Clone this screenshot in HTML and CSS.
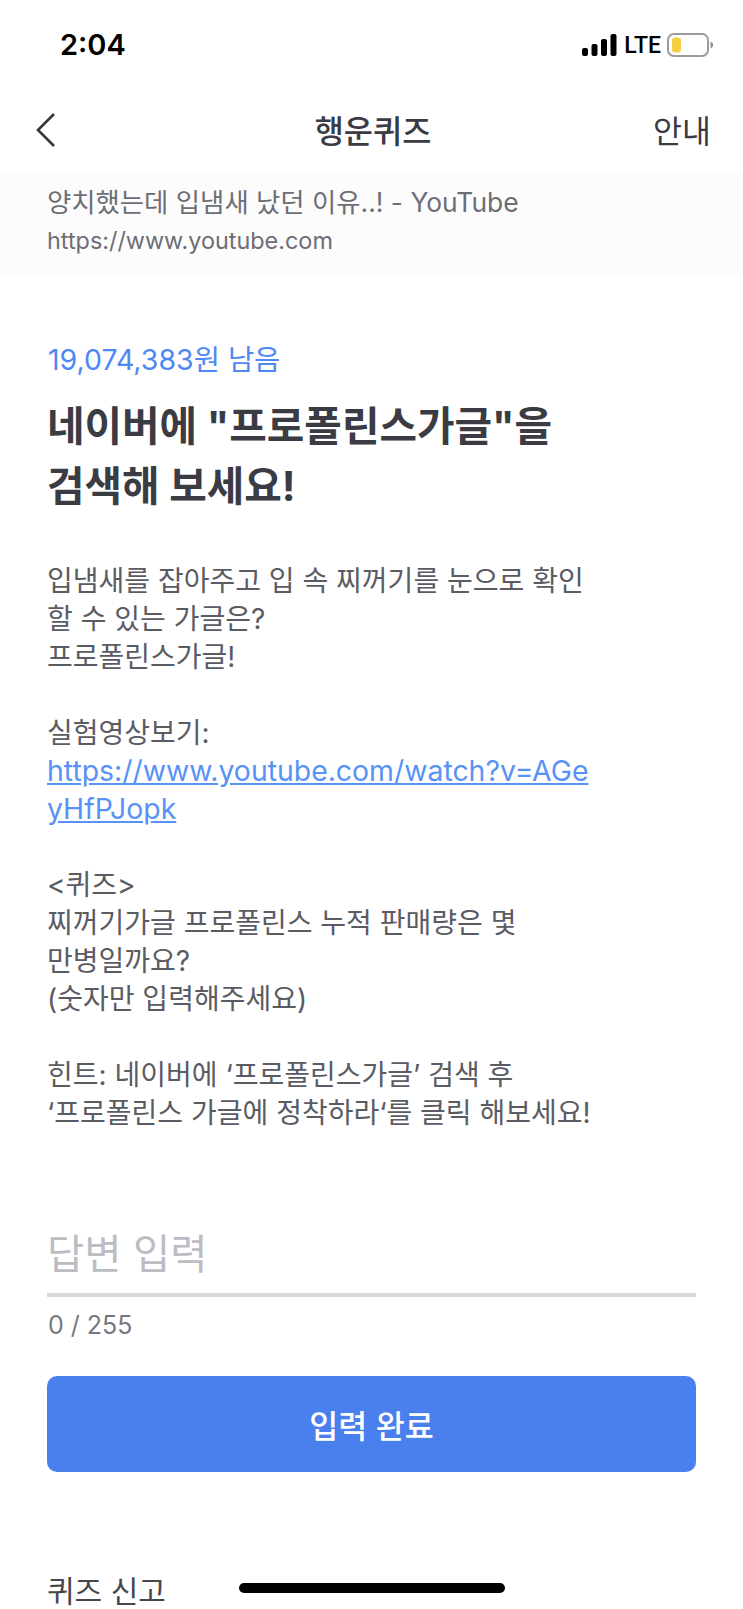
FILE: index.html
```html
<!DOCTYPE html>
<html lang="ko">
<head>
    <meta charset="UTF-8">
    <meta name="viewport" content="width=device-width, initial-scale=1.0">
    <title>행운퀴즈</title>
    <link rel="stylesheet" href="styles.css">
</head>
<body>

    <!-- 상태바 -->
    <div class="status-bar">
        <span class="clock">2:04</span>
        <div class="status-right">
            <svg class="signal" width="36" height="22" viewBox="0 0 36 22">
                <rect x="0" y="14" width="6" height="8" rx="2"></rect>
                <rect x="9.5" y="10" width="6" height="12" rx="2"></rect>
                <rect x="19" y="5" width="6" height="17" rx="2"></rect>
                <rect x="28.500" y="0" width="6" height="22" rx="2"></rect>
            </svg>
            <span class="lte">LTE</span>
            <svg class="battery" width="46" height="24" viewBox="0 0 46 24">
                <rect x="1" y="1" width="40" height="22" rx="6" fill="#fff" stroke="#9b9b9b" stroke-width="2"></rect>
                <rect x="5" y="4.500" width="9" height="15" rx="3" fill="#f8cd46"></rect>
                <path d="M43.500 8.500 L46 10.500 V13.500 L43.500 15.500 Z" fill="#8e8e8e"></path>
            </svg>
        </div>
    </div>

    <!-- 상단 네비 -->
    <div class="nav">
        <svg class="back" width="22" height="36" viewBox="0 0 22 36">
            <path d="M19 2 L3 18 L19 34" fill="none" stroke="#36373d" stroke-width="2.600"></path>
        </svg>
        <span class="nav-title">행운퀴즈</span>
        <span class="nav-link">안내</span>
    </div>

    <!-- 링크 배너 -->
    <div class="banner">
        <p class="banner-title">양치했는데 입냄새 났던 이유..! - YouTube</p>
        <p class="banner-url">https://www.youtube.com</p>
    </div>

    <div class="quiz">
        <p class="remain">19,074,383원 남음</p>
        <h1 class="headline">네이버에 "프로폴린스가글"을<br>검색해 보세요!</h1>

        <div class="desc">
            <p>입냄새를 잡아주고 입 속 찌꺼기를 눈으로 확인<br>할 수 있는 가글은?<br>프로폴린스가글!</p>
            <p>실험영상보기:<br><a href="#">https://www.youtube.com/watch?v=AGe<br>yHfPJopk</a></p>
            <p>&lt;퀴즈&gt;<br>찌꺼기가글 프로폴린스 누적 판매량은 몇<br>만병일까요?<br>(숫자만 입력해주세요)</p>
            <p>힌트: 네이버에 ‘프로폴린스가글’ 검색 후<br>‘프로폴린스 가글에 정착하라‘를 클릭 해보세요!</p>
        </div>

        <div class="answer">
            <div class="answer-input">답변 입력</div>
            <div class="counter">0 / 255</div>
        </div>

        <button class="submit">입력 완료</button>

        <div class="report">퀴즈 신고</div>
    </div>

    <div class="home-bar"></div>

</body>
</html>
```

FILE: styles.css
```css
html, body {
    height: 100%;
}

body {
    margin: 0;
    height: 1609px;
    overflow: hidden;
    position: relative;
    background-color: #fff;
    color: #46474d;
    font-family: Inter, "Noto Sans CJK KR", sans-serif;
}

p {
    margin: 0;
}

.status-bar {
    height: 92px;
    box-sizing: border-box;
    padding: 28px 30px 0 60px;
    display: flex;
    justify-content: space-between;
    align-items: flex-start;
}

.clock {
    font-size: 29px;
    line-height: 34px;
    font-weight: 600;
    color: #000;
}

.status-right {
    display: flex;
    align-items: center;
    height: 34px;
    gap: 6px;
}

.lte {
    font-family: Roboto, sans-serif;
    font-size: 23px;
    font-weight: 500;
    color: #000;
}

.nav {
    height: 82px;
    box-sizing: border-box;
    padding: 0 32px 9px 35px;
    display: grid;
    grid-template-columns: 1fr auto 1fr;
    align-items: center;
}

.back {
    margin-top: 2px;
}

.nav-title {
    font-size: 31.700px;
    font-weight: 500;
    color: #3a3b43;
}

.nav-link {
    justify-self: end;
    font-size: 31.500px;
    color: #3a3b43;
}

.banner {
    height: 101px;
    box-sizing: border-box;
    padding: 8px 47px 0;
    background-color: #fcfcfd;
}

.banner-title {
    font-size: 26.400px;
    line-height: 40px;
    color: #6d6e75;
}

.banner-url {
    font-size: 23.400px;
    line-height: 38px;
    color: #6d6e75;
}

.quiz {
    padding: 0 47px;
}

.remain {
    margin-top: 67px;
    padding-left: 1px;
    font-size: 28.500px;
    line-height: 36px;
    color: #4d88f5;
}

.headline {
    margin: 18px 0 0;
    font-size: 40.800px;
    line-height: 60px;
    font-weight: 700;
    color: #3a3b43;
}

.desc {
    margin-top: 46px;
    font-size: 28px;
    line-height: 38px;
    color: #5a5b63;
}

.desc p {
    margin-bottom: 38px;
}

.desc a {
    font-size: 28.400px;
    color: #5892f6;
}

.answer {
    margin-top: 91px;
}

.answer-input {
    height: 70px;
    border-bottom: 4px solid #d9d9de;
    font-size: 40.500px;
    line-height: 64px;
    color: #bcbcc4;
}

.counter {
    margin-top: 12px;
    padding-left: 1px;
    font-size: 25px;
    line-height: 32px;
    color: #77787f;
}

.submit {
    display: block;
    width: 100%;
    height: 96px;
    margin-top: 35px;
    border: 0;
    border-radius: 10px;
    background-color: #4a80ee;
    color: #fff;
    font-family: inherit;
    font-size: 31.500px;
    font-weight: 500;
}

.report {
    margin-top: 99px;
    font-size: 30px;
    line-height: 40px;
    color: #46474d;
}

.home-bar {
    position: absolute;
    left: 239px;
    top: 1583px;
    width: 266px;
    height: 10px;
    border-radius: 5px;
    background-color: #000;
}
```
